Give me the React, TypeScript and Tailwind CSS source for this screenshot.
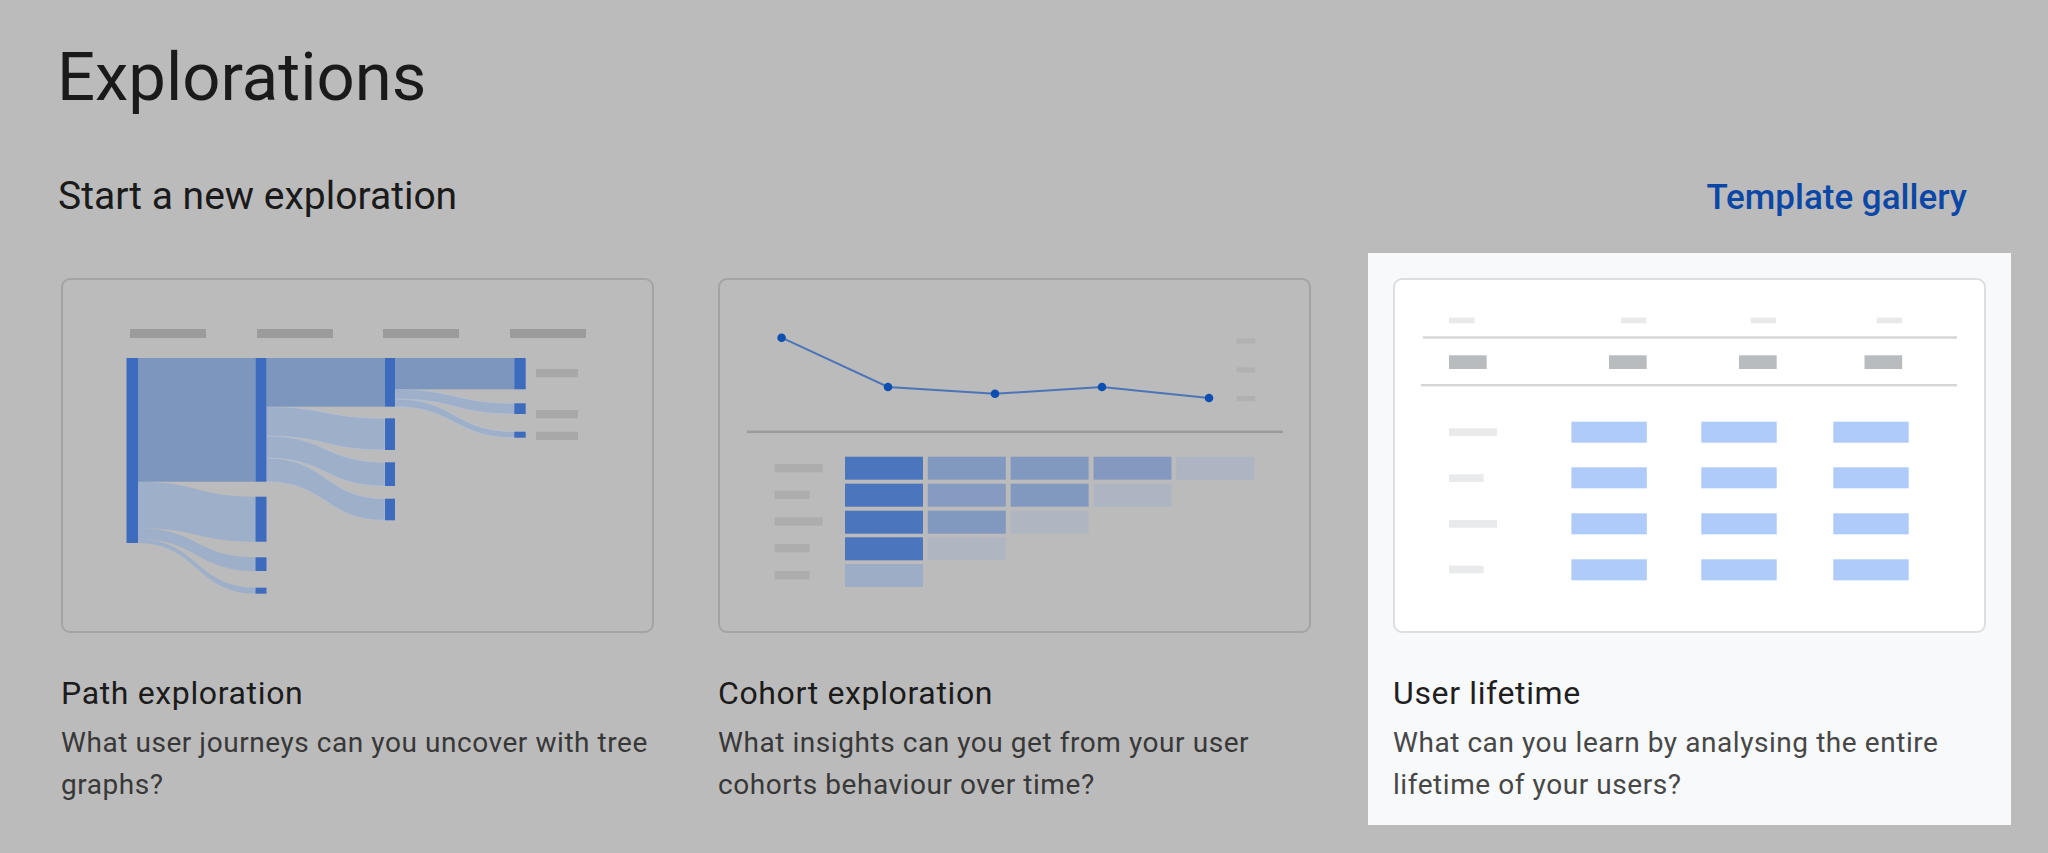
import clsx from "clsx";
import type { ReactNode } from "react";

const NODE = "#3d6cbf";
const DARK = "#7c96be";
const LIGHT = "#9eafc9";

// band between two sankey nodes, source/target given as [top, bottom]
function band(x0: number, s: [number, number], x1: number, t: [number, number]) {
  const m = (x0 + x1) / 2;
  return `M${x0} ${s[0]}C${m} ${s[0]} ${m} ${t[0]} ${x1} ${t[0]}L${x1} ${t[1]}C${m} ${t[1]} ${m} ${s[1]} ${x0} ${s[1]}Z`;
}

const PathArt = () => {
  const cols = [65.5, 194.5, 324, 453.3];
  const widths = [11.5, 11, 10, 11.4];
  const nodes: [number, number, number][] = [
    [0, 80, 265],
    [1, 80, 203.7],
    [1, 218.7, 263.7],
    [1, 279.3, 293],
    [1, 309.7, 315.7],
    [2, 80, 128.7],
    [2, 140.3, 172],
    [2, 184.3, 208],
    [2, 220.7, 242.3],
    [3, 80, 111.3],
    [3, 125.3, 136],
    [3, 153.7, 159.7],
  ];
  const e0 = cols[0] + widths[0];
  const e1 = cols[1] + widths[1];
  const e2 = cols[2] + widths[2];
  return (
    <svg viewBox="2 2 589 351" className="h-full w-full">
      {[69, 196, 322, 449].map((x) => (
        <rect key={x} x={x} y={51} width={76} height={9} fill="#9b9b9b" />
      ))}
      {[91, 132, 153.7].map((y) => (
        <rect key={y} x={475} y={y} width={42} height={8.3} fill="#a8a8a8" />
      ))}
      <path d={band(e0, [203.7, 250], cols[1], [218.7, 263.7])} fill={LIGHT} />
      <path d={band(e0, [250, 261], cols[1], [279.3, 293])} fill={LIGHT} />
      <path d={band(e0, [261, 265], cols[1], [309.7, 315.7])} fill={LIGHT} />
      <rect x={e0} y={80} width={cols[1] - e0} height={123.7} fill={DARK} />
      <path d={band(e1, [128.7, 158], cols[2], [140.3, 172])} fill={LIGHT} stroke="#b4bfd0" strokeWidth={0.8} />
      <path d={band(e1, [158, 180], cols[2], [184.3, 208])} fill={LIGHT} stroke="#b4bfd0" strokeWidth={0.8} />
      <path d={band(e1, [180, 203.7], cols[2], [220.7, 242.3])} fill={LIGHT} stroke="#b4bfd0" strokeWidth={0.8} />
      <rect x={e1} y={80} width={cols[2] - e1} height={48.7} fill={DARK} />
      <path d={band(e2, [111.3, 121], cols[3], [125.3, 136])} fill={LIGHT} stroke="#b4bfd0" strokeWidth={0.8} />
      <path d={band(e2, [121, 128.7], cols[3], [153.7, 159.7])} fill={LIGHT} stroke="#b4bfd0" strokeWidth={0.8} />
      <rect x={e2} y={80} width={cols[3] - e2} height={31.3} fill={DARK} />
      {nodes.map(([c, a, b], i) => (
        <rect key={i} x={cols[c]} y={a} width={widths[c]} height={b - a} fill={NODE} />
      ))}
    </svg>
  );
};

const CohortArt = () => {
  const pts = [
    [63.6, 59.7],
    [170, 109],
    [277, 115.7],
    [384, 109],
    [491, 120],
  ];
  const cellX = [127, 209.8, 292.6, 375.5, 458.3];
  const cellY = [178.7, 205.7, 232.7, 259.3, 286];
  const D = "#4b76bd";
  const M = "#8299bf";
  const L = "#adb5c2";
  const rows = [
    [D, M, M, "#8599c0", L],
    [D, "#859cc0", M, L],
    [D, M, "#b0b6c1"],
    [D, "#b0b6c1"],
    ["#9dadc6"],
  ];
  const labels: [number, number][] = [
    [186, 48],
    [212.7, 35],
    [239.3, 48],
    [266, 35],
    [293, 35],
  ];
  return (
    <svg viewBox="2 2 589 351" className="h-full w-full">
      {[60.3, 89.3, 118].map((y) => (
        <rect key={y} x={518.7} y={y} width={18.5} height={5.2} fill="#b1b1b1" />
      ))}
      <polyline
        points={pts.map((p) => p.join(",")).join(" ")}
        fill="none"
        stroke="#4d74b8"
        strokeWidth={2}
      />
      {pts.map(([x, y]) => (
        <circle key={x} cx={x} cy={y} r={4.3} fill="#0d4fb1" />
      ))}
      <rect x={29} y={152.5} width={536} height={2.6} fill="#9c9c9c" />
      {labels.map(([y, w]) => (
        <rect key={y} x={56.7} y={y} width={w} height={8.3} fill="#adadad" />
      ))}
      {rows.map((r, ri) =>
        r.map((c, ci) => (
          <rect key={`${ri}-${ci}`} x={cellX[ci]} y={cellY[ri]} width={78} height={23} fill={c} />
        ))
      )}
    </svg>
  );
};

const LifetimeArt = () => {
  const headX = [56, 228, 357.8, 483.8];
  const greyX = [56, 216, 346, 471.5];
  const cellX = [178.4, 308.3, 440.3];
  const rowY = [143.7, 189.3, 235.3, 281.3];
  const labels: [number, number][] = [
    [150.3, 48],
    [196.3, 34.6],
    [242, 48],
    [287.7, 34.6],
  ];
  return (
    <svg viewBox="2 2 589 351" className="h-full w-full">
      {headX.map((x) => (
        <rect key={x} x={x} y={39.7} width={25.4} height={5.6} fill="#e9e9ea" />
      ))}
      <rect x={30} y={58.3} width={534} height={2.4} fill="#d5d6d7" />
      {greyX.map((x) => (
        <rect key={x} x={x} y={77.3} width={37.7} height={13.7} fill="#b9bcbf" />
      ))}
      <rect x={28} y={106} width={536} height={2.4} fill="#d5d6d7" />
      {labels.map(([y, w]) => (
        <rect key={y} x={56} y={y} width={w} height={7.7} fill="#e9eaec" />
      ))}
      {rowY.map((y) =>
        cellX.map((x) => (
          <rect key={`${x}-${y}`} x={x} y={y} width={75.4} height={21} fill="#aecbfa" />
        ))
      )}
    </svg>
  );
};

const Card = ({
  art,
  title,
  desc,
  active,
  className,
}: {
  art: ReactNode;
  title: string;
  desc: string;
  active?: boolean;
  className?: string;
}) => (
  <div className={clsx("w-[643px] shrink-0 px-[25px] pt-[25px] pb-[19px]", active && "bg-[#f8f9fa]", className)}>
    <div
      className={clsx(
        "h-[355px] overflow-hidden rounded-[9px] border-2",
        active ? "border-[#dcdee1] bg-white" : "border-[#a4a4a4]"
      )}
    >
      {art}
    </div>
    <h3
      className={clsx(
        "mt-[40px] text-[32px] leading-[40px] tracking-[0.02em]",
        active ? "text-[#1f1f1f]" : "text-[#1b1b1b]"
      )}
    >
      {title}
    </h3>
    <p
      className={clsx(
        "mt-[9px] text-[28px] leading-[42px] tracking-[0.02em]",
        active ? "text-[#474747]" : "text-[#383838]"
      )}
    >
      {desc}
    </p>
  </div>
);

export default function App() {
  return (
    <div className="min-h-screen overflow-hidden bg-[#bbbbbb] font-[Roboto,sans-serif]">
      <h1 className="pl-[57px] pt-[38px] text-[67px] leading-[78px] text-[#1a1a1a]">Explorations</h1>
      <div className="mt-[58px] flex items-baseline justify-between pl-[58px] pr-[81px]">
        <h2 className="text-[39px] leading-[44px] text-[#1a1a1a]">Start a new exploration</h2>
        <a className="text-[35px] font-medium leading-[44px] text-[#0b47a6]">Template gallery</a>
      </div>
      <div className="mt-[33px] flex items-start pl-[36px]">
        <Card
          art={<PathArt />}
          title="Path exploration"
          desc="What user journeys can you uncover with tree graphs?"
        />
        <Card
          className="ml-[14px]"
          art={<CohortArt />}
          title="Cohort exploration"
          desc="What insights can you get from your user cohorts behaviour over time?"
        />
        <Card
          className="ml-[32px]"
          active
          art={<LifetimeArt />}
          title="User lifetime"
          desc="What can you learn by analysing the entire lifetime of your users?"
        />
      </div>
    </div>
  );
}
